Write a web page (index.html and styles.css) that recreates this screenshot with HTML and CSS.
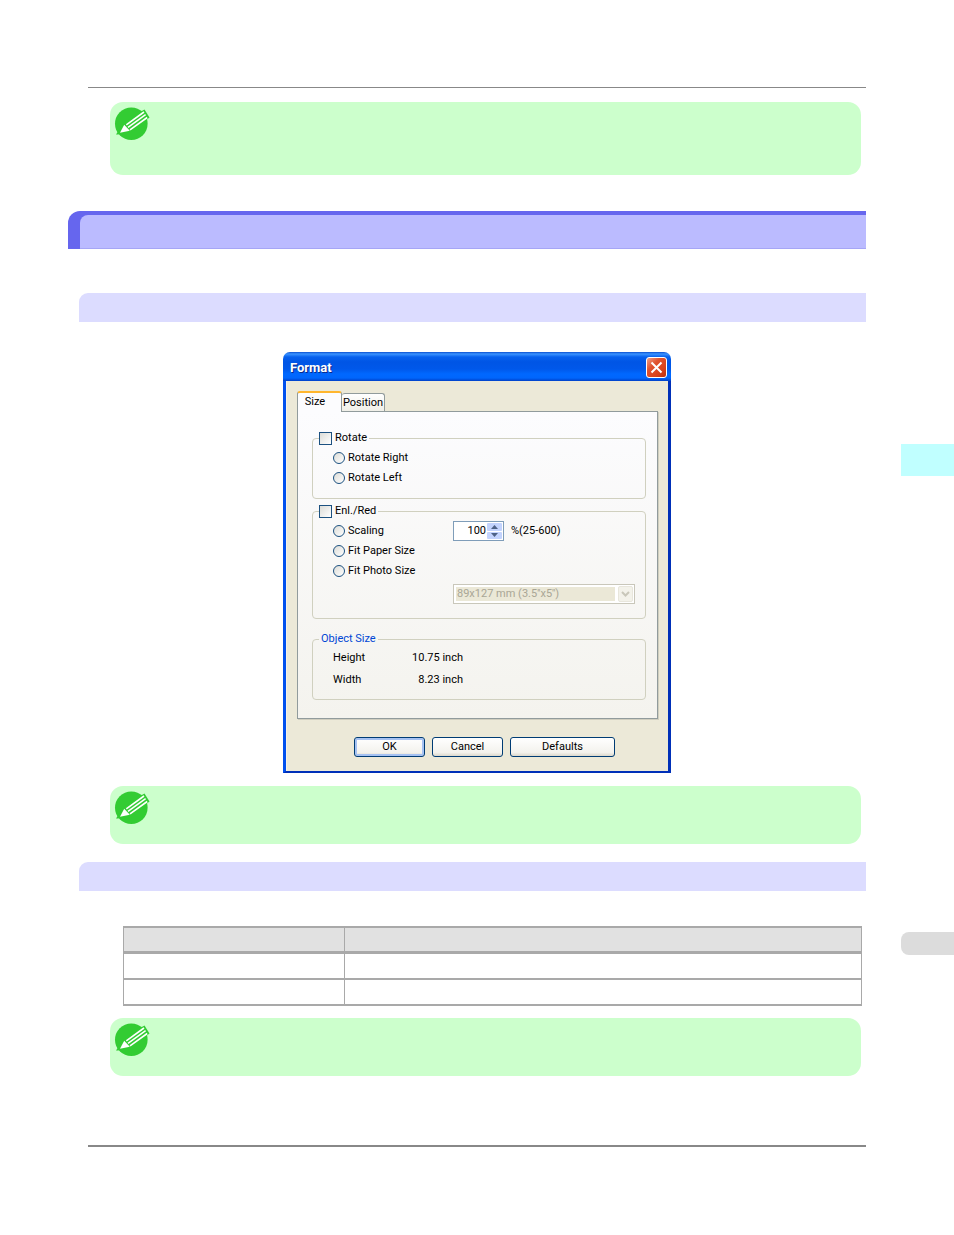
FILE: index.html
```
<!DOCTYPE html>
<html lang="en">
	<head>
		<meta charset="UTF-8">
		<title>Format</title>
		<link rel="stylesheet" href="styles.css">
	</head>
	<body>
		<svg class="defs" width="0" height="0">
			<symbol id="pencil" viewBox="0 0 36 34">
				<circle cx="17.3" cy="16.8" r="16.3" fill="#33cc33"/>
				<path d="M2 27.5 L9 17 L26 5 L30.5 2.5 L35.5 10.5 L31 14 L15 25 L4 27.5Z" fill="#33cc33"/>
				<path d="M6 25.7 L10.2 17.7 L15.8 23.7Z" fill="#fff"/>
				<path d="M12.3 17.8 L30 5 M14 20.3 L31.6 7.7 M16 22.9 L33.2 10.5" stroke="#fff" stroke-width="1.6"/>
			</symbol>
		</svg>
		<div class="page">
			<main>
				<hr class="rule">
				<div class="note note-tall"><svg><use href="#pencil"/></svg></div>
				<div class="bar-big"><div></div></div>
				<div class="bar"></div>

				<div class="figure">
					<form class="dialog">
						<div class="titlebar">
							<span>Format</span>
							<button type="button" class="close" aria-label="Close">
								<svg width="19" height="19" viewBox="0 0 19 19"><path d="M4.5 4.5 L14.5 14.5 M14.5 4.5 L4.5 14.5" stroke="#fff" stroke-width="2"/></svg>
							</button>
						</div>
						<div class="client">
							<div class="tabs">
								<button type="button" class="tab active">Size</button>
								<button type="button" class="tab">Position</button>
							</div>
							<div class="panel">
								<fieldset class="rotate">
									<legend><label><input type="checkbox">Rotate</label></legend>
									<div class="row"><label><input type="radio" name="rotate">Rotate Right</label></div>
									<div class="row"><label><input type="radio" name="rotate">Rotate Left</label></div>
								</fieldset>
								<fieldset class="enlarge">
									<legend><label><input type="checkbox">Enl./Red</label></legend>
									<div class="row">
										<label><input type="radio" name="fit">Scaling</label>
										<div class="spin">
											<input type="number" id="scale" value="100" min="25" max="600">
											<div class="arrows">
												<button type="button" aria-label="Up"><svg width="7" height="4"><path d="M0 4 L3.5 0 L7 4Z" fill="#4d6185"/></svg></button>
												<button type="button" aria-label="Down"><svg width="7" height="4"><path d="M0 0 L3.5 4 L7 0Z" fill="#4d6185"/></svg></button>
											</div>
										</div>
										<label for="scale" class="unit">%(25-600)</label>
									</div>
									<div class="row"><label><input type="radio" name="fit">Fit Paper Size</label></div>
									<div class="row"><label><input type="radio" name="fit">Fit Photo Size</label></div>
									<div class="combo">
										<select aria-label="Photo size" disabled>
											<option>89x127 mm (3.5''x5'')</option>
										</select>
										<span class="drop"><svg width="9" height="6"><path d="M1 1 L4.5 4.5 L8 1" fill="none" stroke="#c9c7ba" stroke-width="2"/></svg></span>
									</div>
								</fieldset>
								<fieldset class="object">
									<legend>Object Size</legend>
									<div class="row"><span>Height</span><span>10.75 inch</span></div>
									<div class="row"><span>Width</span><span>8.23 inch</span></div>
								</fieldset>
							</div>
							<div class="buttons">
								<button type="button" class="btn default">OK</button>
								<button type="button" class="btn">Cancel</button>
								<button type="button" class="btn wide">Defaults</button>
							</div>
						</div>
					</form>
				</div>

				<div class="note"><svg><use href="#pencil"/></svg></div>
				<div class="bar"></div>
				<table>
					<tr><th class="name"></th><th></th></tr>
					<tr><td></td><td></td></tr>
					<tr><td></td><td></td></tr>
				</table>
				<div class="note"><svg><use href="#pencil"/></svg></div>
				<hr class="rule rule-end">
			</main>
			<aside>
				<div class="mark"></div>
				<div class="number"></div>
			</aside>
		</div>
	</body>
</html>
```
FILE: styles.css
```
*{
	box-sizing: border-box;
}
body{
	margin: 0;
	background: #fff;
	font-family: Roboto, sans-serif;
	font-size: 11px;
	line-height: 14px;
	color: #000;
}
button,input,select{
	font: inherit;
	color: inherit;
	margin: 0;
	padding: 0;
}
svg{
	display: block;
}
.defs{
	position: absolute;
}
.page{
	display: flex;
	gap: 35px;
	padding-left: 68px;
}
main{
	flex: 1;
	display: flex;
	flex-direction: column;
	padding-top: 87px;
}
aside{
	width: 53px;
	padding-top: 444px;
}
.mark{
	height: 32px;
	background: #c0ffff;
}
.number{
	height: 23px;
	margin-top: 456px;
	border-radius: 8px 0 0 8px;
	background: #dcdcdc;
}
.rule{
	height: 1px;
	margin: 0 0 14px 20px;
	border: none;
	background: #888;
}
.rule-end{
	height: 2px;
	margin: 69px 0 0 20px;
}

/* green note boxes */
.note{
	height: 58px;
	margin: 0 5px 0 42px;
	padding: 5px 4px;
	border-radius: 13px;
	background: #ccffcc;
}
.note svg{
	width: 36px;
	height: 34px;
}
.note-tall{
	height: 73px;
}

/* heading bars */
.bar-big{
	height: 38px;
	margin: 36px 0 44px;
	padding: 4px 0 0 12px;
	border-radius: 12px 0 0 0;
	background: #6666ee;
}
.bar-big div{
	height: 100%;
	border-radius: 8px 0 0 0;
	border-bottom: 1px solid #a6a6f6;
	background: #bbbbff;
}
.bar{
	height: 29px;
	margin-left: 11px;
	border-radius: 9px 0 0 0;
	background: #dcdcff;
}
.note + .bar{
	margin-top: 18px;
}

/* dialog */
.figure{
	display: flex;
	justify-content: center;
	padding: 30px 0 13px 20px;
}
.dialog{
	width: 388px;
}
.titlebar{
	display: flex;
	justify-content: space-between;
	align-items: center;
	height: 29px;
	padding: 2px 4px 0 7px;
	border-radius: 7px 7px 0 0;
	background: linear-gradient(#0a4fd0, #3a93ff 2px, #0660ee 5px, #0055e5 10px, #0058ea 17px, #0068ff 22px, #0066fc 26px, #0040c8);
	color: #fff;
	font-size: 13px;
	font-weight: bold;
	text-shadow: 1px 1px #0a2a8c;
}
.close{
	width: 21px;
	height: 21px;
	border: 1px solid #fff;
	border-radius: 3px;
	background: linear-gradient(135deg, #f0a088, #e0532f 35%, #d9431c 70%, #b83010);
}
.client{
	padding: 10px 10px 14px 11px;
	border: solid #0050ee;
	border-width: 0 3px 2px;
	border-right-color: #0030b8;
	border-bottom-color: #0030b8;
	box-shadow: inset 1px 0 #f4f2e8;
	background: #ece9d8;
}
.tabs{
	display: flex;
	align-items: flex-end;
	height: 20px;
}
.tab{
	width: 43px;
	height: 18px;
	border: 1px solid #919b9c;
	border-width: 1px 1px 0 0;
	border-radius: 3px 3px 0 0;
	background: linear-gradient(#fff, #f0efe8);
}
.tab.active{
	position: relative;
	width: 45px;
	height: 21px;
	margin-bottom: -1px;
	padding: 0 9px 2px 0;
	border-width: 2px 1px 0;
	border-top-color: #ffb62e;
	background: #fcfcfe;
}
.panel{
	padding: 19px 11px 18px 14px;
	border: 1px solid #919b9c;
	box-shadow: 1px 1px #d0cebf;
	background: linear-gradient(#fcfcfe, #f4f3ee);
}
fieldset{
	min-width: 0;
	margin: 0;
	padding: 3px 10px 10px 20px;
	border: 1px solid #d0d0bf;
	border-radius: 4px;
}
legend{
	height: 14px;
	margin-left: -14px;
	padding: 0 2px 0 0;
}
label{
	display: flex;
	align-items: center;
}
.row{
	display: flex;
	align-items: center;
	height: 20px;
}
input[type=checkbox],input[type=radio]{
	appearance: none;
	width: 13px;
	height: 13px;
	margin-right: 3px;
	border: 1px solid #1c5180;
	background: linear-gradient(135deg, #dcdcd7, #fff);
}
input[type=radio]{
	width: 12px;
	height: 12px;
	border-radius: 50%;
}
.enlarge{
	margin-top: 5px;
	padding-bottom: 14px;
}
.enlarge .row > label:first-child{
	width: 120px;
}
.spin{
	display: flex;
	width: 51px;
	height: 20px;
	padding: 1px;
	border: 1px solid #7f9db9;
	background: #fff;
}
.spin input{
	flex: 1;
	min-width: 0;
	border: none;
	background: none;
	text-align: right;
	appearance: textfield;
}
.spin input::-webkit-inner-spin-button{
	display: none;
}
.arrows{
	display: grid;
	gap: 1px;
	width: 15px;
	margin-left: 1px;
}
.arrows button{
	display: flex;
	justify-content: center;
	align-items: center;
	border: none;
	border-radius: 1px;
	background: #c3d3fd;
}
.unit{
	margin-left: 7px;
}
.combo{
	display: flex;
	gap: 2px;
	width: 182px;
	height: 20px;
	margin: 3px 0 0 120px;
	padding: 1px;
	border: 1px solid #c9c7ba;
	background: #fff;
}
.combo select{
	appearance: none;
	flex: 1;
	min-width: 0;
	margin: 1px;
	padding-left: 1px;
	border: none;
	border-radius: 0;
	background: #ebe8d7;
	color: #a9a695;
	opacity: 1;
}
.drop{
	display: grid;
	place-items: center;
	width: 15px;
	border: 1px solid #e8e6dc;
	border-radius: 2px;
	background: #f3f2ea;
}
.object{
	margin-top: 13px;
	padding: 1px 10px 8px 20px;
}
.object legend{
	padding: 0 2px;
	color: #0046d5;
}
.object .row{
	justify-content: space-between;
	width: 130px;
	height: 22px;
}
.buttons{
	display: flex;
	gap: 7px;
	margin: 18px 0 0 57px;
}
.btn{
	width: 71px;
	height: 20px;
	border: 1px solid #003c74;
	border-radius: 3px;
	background: linear-gradient(#fff, #f3f2ed 80%, #dcd8cc);
}
.btn.default{
	box-shadow: inset 0 0 0 2px #a6c2f2;
}
.btn.wide{
	width: 105px;
}

table{
	margin: 35px 4px 12px 55px;
	border-spacing: 0;
	border-left: 1px solid #a9a9a9;
	table-layout: fixed;
}
th,td{
	height: 26px;
	padding: 0;
	border-right: 1px solid #a9a9a9;
	border-bottom: 2px solid #a9a9a9;
}
th{
	height: 28px;
	border-top: 2px solid #a9a9a9;
	border-bottom-width: 3px;
	background: #e1e1e1;
}
.name{
	width: 30%;
}
```
